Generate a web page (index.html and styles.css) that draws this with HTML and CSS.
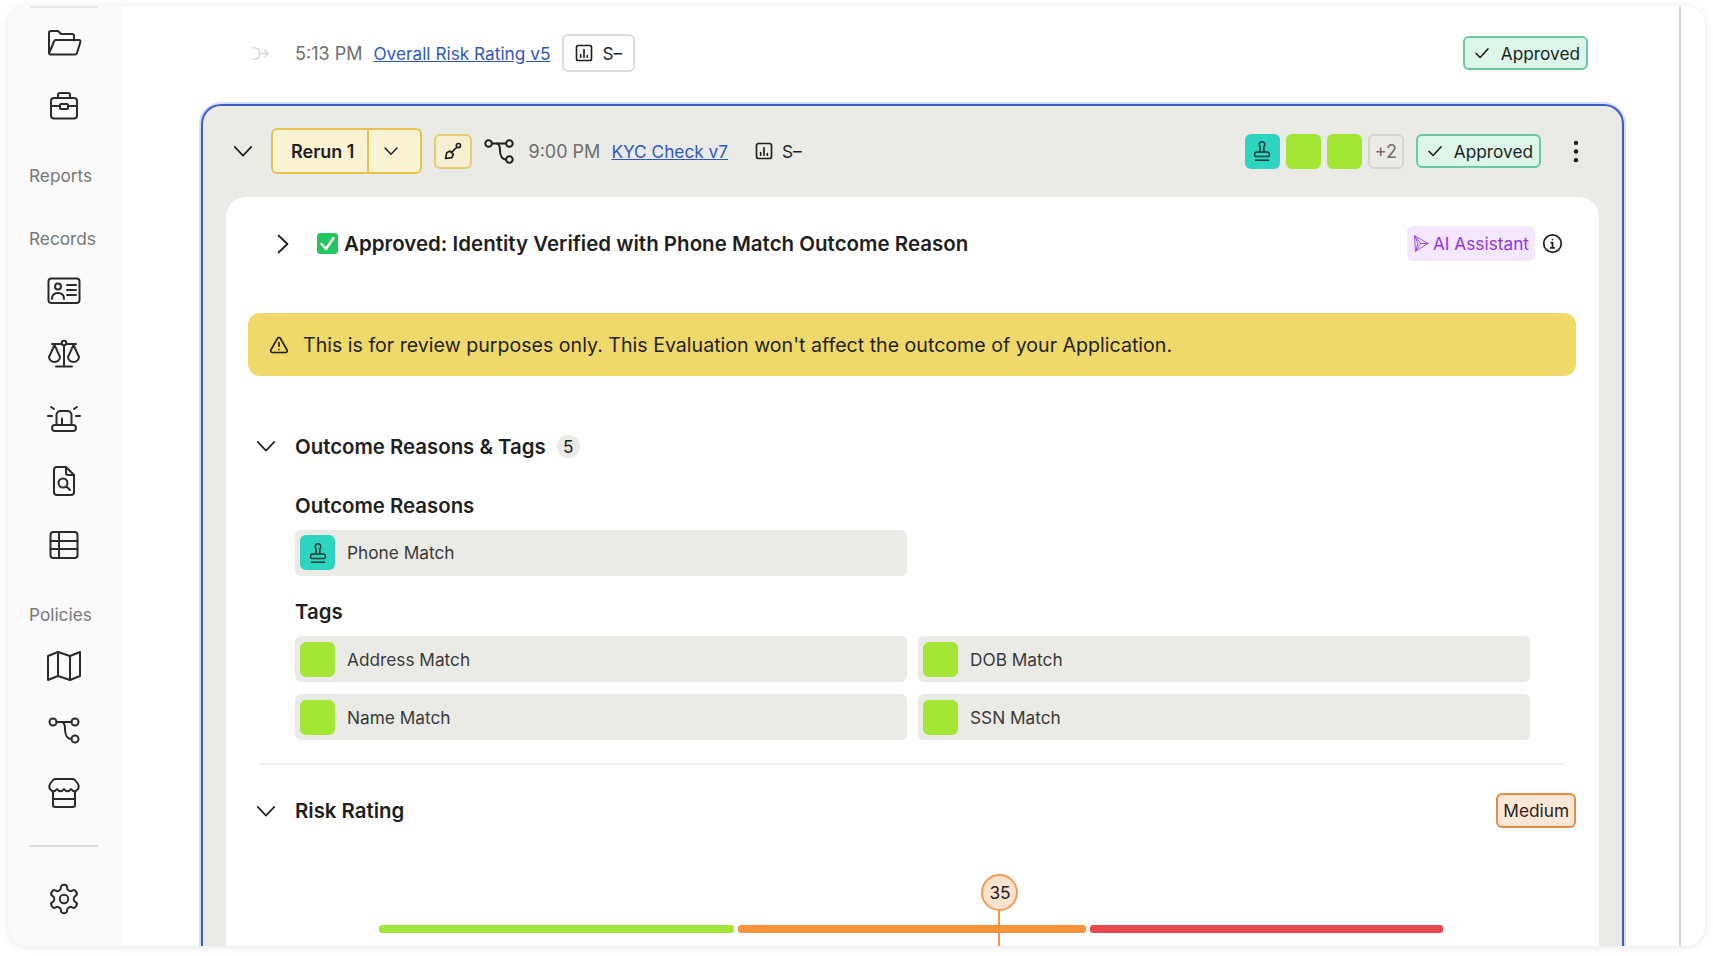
FILE: index.html
```html
<!DOCTYPE html>
<html lang="en">
<head>
  <meta charset="UTF-8">
  <title>Evaluation</title>
  <link rel="stylesheet" href="styles.css">
</head>
<body>
  <svg class="sprites" xmlns="http://www.w3.org/2000/svg">
    <symbol id="i-stamp" viewBox="0 0 24 24"><path d="M5 22h14"/><path d="M19.27 13.73A2.5 2.5 0 0 0 17.5 13h-11A2.5 2.5 0 0 0 4 15.5V17a1 1 0 0 0 1 1h14a1 1 0 0 0 1-1v-1.5c0-.66-.26-1.3-.73-1.77Z"/><path d="M14 13V8.5C14 7 15 7 15 5a3 3 0 0 0-3-3c-1.66 0-3 1-3 3s1 2 1 3.5V13"/></symbol>
    <symbol id="i-chart" viewBox="0 0 24 24"><rect x="3" y="3" width="18" height="18" rx="2.5"/><path d="M8 17v-3M12 17V8M16 17v-2"/></symbol>
    <symbol id="i-check" viewBox="0 0 24 24"><path d="M4 12.5l5.5 5.5L20 6.5"/></symbol>
    <symbol id="i-down" viewBox="0 0 24 24"><path d="M3 7.5l9 9.5 9-9.5"/></symbol>
    <symbol id="i-flow" viewBox="0 0 36 36"><circle cx="7" cy="10" r="3.5"/><circle cx="29" cy="10" r="3.5"/><circle cx="29" cy="27" r="3.5"/><path d="M10.5 10h15"/><path d="M15.5 10c3 0 3.5 2.5 3.5 7 0 6 2.5 10 6.500 10"/></symbol>
  </svg>

  <div class="window">
    <nav class="sidebar">
      <div class="sliver"></div>
      <a class="nav-item"><svg class="nav-icon" viewBox="0 0 36 36"><path d="M3 28V8a2 2 0 0 1 2-2h7l3 3h11a2 2 0 0 1 2 2v4.5"/><path d="M3 28.5l5-12a2 2 0 0 1 2-1.5h23a1.5 1.5 0 0 1 1.4 2l-3.4 11a2 2 0 0 1-2 1.500H4.500A1.500 1.500 0 0 1 3 28z"/></svg></a>
      <a class="nav-item"><svg class="nav-icon" viewBox="0 0 36 36"><rect x="5" y="10" width="26" height="20.5" rx="3"/><path d="M12 10V7a2 2 0 0 1 2-2h8a2 2 0 0 1 2 2v3"/><path d="M5 18h9M22 18h9"/><rect x="14" y="16" width="8" height="5" rx="1"/></svg></a>
      <div class="nav-label">Reports</div>
      <div class="nav-label nav-label-wide">Records</div>
      <a class="nav-item"><svg class="nav-icon" viewBox="0 0 36 36"><rect x="2.5" y="5.5" width="31" height="24.5" rx="3"/><circle cx="12" cy="13.5" r="3"/><path d="M6 26c0-4 2.5-6 6-6s6 2 6 6"/><path d="M21 12h9M21 17h9M21 22h9"/></svg></a>
      <a class="nav-item"><svg class="nav-icon" viewBox="0 0 36 36"><path d="M18 9v21M10 30.500h16M6 8h24"/><circle class="dot" cx="18" cy="7" r="2.2"/><path d="M8.5 9L3 21a5.5 5 0 0 0 11 0z"/><path d="M27.5 9L22 21a5.5 5 0 0 0 11 0z"/></svg></a>
      <a class="nav-item"><svg class="nav-icon" viewBox="0 0 36 36"><path d="M10.5 25V15a4 4 0 0 1 4-4h7a4 4 0 0 1 4 4v10"/><rect x="6" y="25" width="24" height="6" rx="3"/><path d="M16 18.5V25M2 16h4M30 16h4M5 7l3 2M31 7l-3 2"/></svg></a>
      <a class="nav-item"><svg class="nav-icon" viewBox="0 0 36 36"><path d="M20 4H11a3 3 0 0 0-3 3v22a3 3 0 0 0 3 3h14a3 3 0 0 0 3-3V12z"/><path d="M20 4v6a2 2 0 0 0 2 2h6"/><circle cx="17" cy="20" r="4.5"/><path d="M20.5 23.5l3.5 3.5"/></svg></a>
      <a class="nav-item"><svg class="nav-icon" viewBox="0 0 36 36"><rect x="4.5" y="5" width="27" height="26" rx="3"/><path d="M4.5 14h27M4.500 22h27M13 5v26"/></svg></a>
      <div class="nav-label">Policies</div>
      <a class="nav-item"><svg class="nav-icon" viewBox="0 0 36 36"><path d="M2 8l10-4 12 4 10-4v24l-10 4-12-4-10 4z"/><path d="M12 4v24M24 8v24"/></svg></a>
      <a class="nav-item"><svg class="nav-icon"><use href="#i-flow"/></svg></a>
      <a class="nav-item"><svg class="nav-icon" viewBox="0 0 36 36"><path d="M4 14c-1-1.500-1-3 0-5l3-4q1-1 3-1h16q2 0 3 1l3 4c1 2 1 3.500 0 5"/><path d="M4 14c2 3 5 3 7 0 2 3 5 3 7 0 2 3 5 3 7 0 2 3 5 3 7 0"/><path d="M7 17v13a2 2 0 0 0 2 2h18a2 2 0 0 0 2-2V17M7 24h22"/></svg></a>
      <div class="nav-rule"></div>
      <a class="nav-item"><svg class="nav-icon nav-gear" viewBox="0 0 24 24"><path d="M12.22 2h-.44a2 2 0 0 0-2 2v.18a2 2 0 0 1-1 1.73l-.43.25a2 2 0 0 1-2 0l-.15-.08a2 2 0 0 0-2.73.73l-.22.38a2 2 0 0 0 .73 2.73l.15.1a2 2 0 0 1 1 1.72v.51a2 2 0 0 1-1 1.74l-.15.09a2 2 0 0 0-.73 2.73l.22.38a2 2 0 0 0 2.73.73l.15-.08a2 2 0 0 1 2 0l.43.25a2 2 0 0 1 1 1.73V20a2 2 0 0 0 2 2h.44a2 2 0 0 0 2-2v-.18a2 2 0 0 1 1-1.73l.43-.25a2 2 0 0 1 2 0l.15.08a2 2 0 0 0 2.73-.73l.22-.39a2 2 0 0 0-.73-2.73l-.15-.08a2 2 0 0 1-1-1.74v-.5a2 2 0 0 1 1-1.74l.15-.09a2 2 0 0 0 .73-2.73l-.22-.38a2 2 0 0 0-2.73-.73l-.15.08a2 2 0 0 1-2 0l-.43-.25a2 2 0 0 1-1-1.73V4a2 2 0 0 0-2-2z"/><circle cx="12" cy="12" r="3"/></svg></a>
    </nav>

    <main class="content">
      <div class="run-row">
        <svg class="merge-icon" viewBox="0 0 20 16"><path d="M1 2h3c3 0 5 2.500 5 6s-2 6-5 6H1"/><path d="M9 8h9M14.500 4.500L18 8l-3.500 3.500"/></svg>
        <span class="time">5:13 PM</span>
        <a class="run-link" href="#">Overall Risk Rating v5</a>
        <span class="score-box"><svg class="chart-icon"><use href="#i-chart"/></svg>S&ndash;</span>
        <span class="status"><svg class="check-icon"><use href="#i-check"/></svg>Approved</span>
      </div>

      <section class="card">
        <header class="card-head">
          <svg class="toggle"><use href="#i-down"/></svg>
          <div class="rerun">
            <span class="rerun-name">Rerun 1</span>
            <span class="rerun-caret"><svg class="caret"><use href="#i-down"/></svg></span>
          </div>
          <button class="shovel">
            <svg viewBox="0 0 24 24"><path d="M3 21l1.5-7 4-2 4 4-2 4z"/><path d="M10 14l6.5-6.5"/><circle cx="18.5" cy="5.5" r="2.5"/></svg>
          </button>
          <svg class="flow-icon"><use href="#i-flow"/></svg>
          <span class="time">9:00 PM</span>
          <a class="run-link" href="#">KYC Check v7</a>
          <span class="score-plain"><svg class="chart-icon"><use href="#i-chart"/></svg>S&ndash;</span>
          <div class="head-right">
            <span class="swatch teal"><svg class="stamp"><use href="#i-stamp"/></svg></span>
            <span class="swatch lime"></span>
            <span class="swatch lime"></span>
            <span class="more">+2</span>
            <span class="status"><svg class="check-icon"><use href="#i-check"/></svg>Approved</span>
            <svg class="kebab" viewBox="0 0 6 24"><circle cx="3" cy="3" r="2.3"/><circle cx="3" cy="12" r="2.3"/><circle cx="3" cy="21" r="2.3"/></svg>
          </div>
        </header>

        <div class="panel">
          <div class="title-row">
            <svg class="toggle-right" viewBox="0 0 12 20"><path d="M1.5 1.5L10.500 10l-9 8.500"/></svg>
            <svg class="tick" viewBox="0 0 21 21"><rect width="21" height="21" rx="3.5"/><path d="M4.5 11l4.500 5 7.500-11"/></svg>
            <h1>Approved: Identity Verified with Phone Match Outcome Reason</h1>
            <span class="ai-chip">
              <svg viewBox="0 0 18 18"><path d="M2 1l14 8-13 8zM2 1l6 8-5 8M2 1l3 8-2 8M8 9h8"/></svg>
              AI Assistant
            </span>
            <svg class="info" viewBox="0 0 24 24"><circle cx="12" cy="12" r="10"/><path d="M12 17v-6h-1.5M10 17h4M12 7.5v.01"/></svg>
          </div>

          <div class="banner">
            <svg viewBox="0 0 24 24"><path d="M21.7 18l-8-14a2 2 0 0 0-3.5 0l-8 14A2 2 0 0 0 4 21h16a2 2 0 0 0 1.7-3z"/><path d="M12 9v4.5M12 17.5v.01"/></svg>
            This is for review purposes only. This Evaluation won't affect the outcome of your Application.
          </div>

          <div class="section-head">
            <svg class="toggle"><use href="#i-down"/></svg>
            <h2>Outcome Reasons &amp; Tags</h2>
            <span class="count">5</span>
          </div>

          <div class="section-body">
            <h3>Outcome Reasons</h3>
            <div class="chips">
              <div class="chip"><span class="swatch teal"><svg class="stamp"><use href="#i-stamp"/></svg></span>Phone Match</div>
            </div>
            <h3 class="tags-title">Tags</h3>
            <div class="chips">
              <div class="chip"><span class="swatch lime"></span>Address Match</div>
              <div class="chip"><span class="swatch lime"></span>DOB Match</div>
              <div class="chip"><span class="swatch lime"></span>Name Match</div>
              <div class="chip"><span class="swatch lime"></span>SSN Match</div>
            </div>
          </div>

          <hr class="rule">

          <div class="section-head risk-head">
            <svg class="toggle"><use href="#i-down"/></svg>
            <h2>Risk Rating</h2>
            <span class="level">Medium</span>
          </div>

          <div class="meter">
            <div class="marker" style="left: 58.22%"><span>35</span></div>
            <div class="bars">
              <i class="bar bar-low"></i>
              <i class="bar bar-mid"></i>
              <i class="bar bar-high"></i>
            </div>
          </div>
        </div>
      </section>
    </main>

    <div class="scroll-track"></div>
  </div>
</body>
</html>
```

FILE: styles.css
```css
* {
  margin: 0;
  padding: 0;
  box-sizing: border-box;
}

html, body {
  height: 100%;
  overflow: hidden;
}

body {
  padding: 6px 8px 10px;
  font-family: Inter, "Noto Sans", sans-serif;
  font-size: 17.25px;
  color: #1f1f1e;
  background-color: #fff;
}

svg {
  fill: none;
  stroke: currentColor;
  stroke-linecap: round;
  stroke-linejoin: round;
  flex: none;
}

.sprites {
  display: none;
}

.window {
  display: flex;
  height: 940px;
  overflow: hidden;
  border-radius: 20px;
  background-color: #fff;
  box-shadow: 0 1px 8px rgba(0, 0, 0, .1);
}

/* sidebar */
.sidebar {
  display: flex;
  flex-direction: column;
  flex: none;
  width: 113px;
  background-color: #fafafa;
}

.sliver {
  flex: none;
  width: 68px;
  height: 2px;
  margin: 0 auto 3px 22px;
  background-color: #e6e6e3;
}

.nav-item {
  display: flex;
  flex: none;
  justify-content: center;
  align-items: center;
  height: 63.5px;
  padding-right: 2px;
  color: #2b2b2a;
}

.nav-icon {
  width: 36px;
  height: 36px;
  stroke-width: 2;
}

.nav-gear {
  width: 34px;
  height: 34px;
  stroke-width: 1.4;
}

.dot {
  fill: #fafafa;
}

.nav-label {
  flex: none;
  height: 24px;
  margin: 26px 0 8px 21px;
  font-size: 17.25px;
  line-height: 24px;
  color: #777775;
}

.nav-label-wide {
  margin-top: 31px;
}

.nav-rule {
  flex: none;
  width: 69px;
  height: 2px;
  margin: 20px 0 20px 21px;
  background-color: #dcdcd9;
}

/* main column */
.content {
  flex: 1;
  min-width: 0;
  padding: 28px 55px 0 80px;
}

.scroll-track {
  flex: none;
  width: 26px;
  border-left: 2px solid #d8d8d3;
}

.run-row {
  display: flex;
  align-items: center;
  height: 38px;
  margin-bottom: 32px;
  padding: 0 36px 0 50px;
}

.merge-icon {
  width: 19px;
  height: 15px;
  margin-right: 25px;
  color: #d5d5d0;
  stroke-width: 1.5;
}

.time {
  margin-right: 11px;
  font-size: 18px;
  color: #6f6f6c;
}

.run-link {
  color: #2f58c4;
}

.score-box,
.score-plain {
  display: flex;
  align-items: center;
  gap: 8px;
}

.score-box {
  height: 38px;
  margin-left: 12px;
  padding: 0 11px 0 10px;
  border: 2px solid #dcdcd8;
  border-radius: 6px;
}

.score-plain {
  margin-left: 26px;
}

.chart-icon {
  width: 20px;
  height: 20px;
  stroke-width: 2;
}

.status {
  display: flex;
  align-items: center;
  gap: 10px;
  height: 34px;
  margin-left: auto;
  padding: 0 6px 0 8px;
  border: 2px solid #6dc6a2;
  border-radius: 6px;
  background-color: #dcf6e9;
}

.check-icon {
  width: 18px;
  height: 18px;
  stroke-width: 2;
}

/* card */
.card {
  border: 2px solid #3a5fc8;
  border-bottom: 0;
  border-radius: 20px 20px 0 0;
  padding: 22px 23px 0;
  background-color: #eaeae6;
  box-shadow: 0 0 0 2px #d6def6;
}

.card-head {
  display: flex;
  align-items: center;
  height: 46px;
  margin-bottom: 23px;
  padding-left: 6px;
}

.toggle {
  width: 22px;
  height: 22px;
  stroke-width: 1.8;
}

.rerun {
  display: flex;
  align-items: stretch;
  height: 46px;
  margin-left: 17px;
  border: 2px solid #e4c552;
  border-radius: 6px;
  background-color: #f9f2d3;
}

.rerun-name {
  display: flex;
  align-items: center;
  padding: 0 13px 0 18px;
  border-right: 2px solid #e4c552;
  font-size: 18px;
  font-weight: 600;
}

.rerun-caret {
  display: flex;
  align-items: center;
  justify-content: center;
  width: 51px;
  padding-right: 8px;
}

.caret {
  width: 16px;
  height: 16px;
  stroke-width: 2.2;
}

.shovel {
  display: flex;
  align-items: center;
  justify-content: center;
  width: 38px;
  height: 35px;
  margin: 0 10px 0 12px;
  border: 2px solid #e4cd75;
  border-radius: 6px;
  color: #1f1f1e;
  background-color: #f6efd2;
}

.shovel svg {
  width: 20px;
  height: 20px;
  stroke-width: 2;
}

.flow-icon {
  width: 34px;
  height: 34px;
  margin-right: 12px;
  stroke-width: 2.1;
}

.head-right {
  display: flex;
  align-items: center;
  margin-left: auto;
  gap: 6px;
}

.swatch {
  display: flex;
  align-items: center;
  justify-content: center;
  flex: none;
  width: 35px;
  height: 35px;
  border-radius: 6px;
}

.teal {
  background-color: #2dd4bf;
}

.lime {
  background-color: #a3e635;
}

.stamp {
  width: 22px;
  height: 22px;
  stroke-width: 1.7;
  color: #143c38;
}

.more {
  display: flex;
  align-items: center;
  justify-content: center;
  width: 36px;
  height: 35px;
  border: 2px solid #d4d4d0;
  border-radius: 6px;
  font-size: 18px;
  color: #6f6f6c;
}

.head-right .status {
  margin-left: 6px;
}

.kebab {
  width: 6px;
  height: 23px;
  margin: 0 20px 0 26px;
  fill: #1f1f1e;
  stroke: none;
}

/* white panel */
.panel {
  height: 760px;
  padding: 29px 23px 0 22px;
  border-radius: 20px 20px 0 0;
  background-color: #fff;
}

.title-row {
  display: flex;
  align-items: center;
  height: 35px;
  margin-bottom: 52px;
  padding: 0 13px 0 29px;
}

.toggle-right {
  width: 12px;
  height: 20px;
  margin-right: 28px;
  stroke-width: 1.8;
}

.tick {
  width: 21px;
  height: 21px;
  margin-right: 6px;
  fill: #22c55e;
  stroke: none;
}

.tick path {
  fill: none;
  stroke: #fff;
  stroke-width: 2.5;
}

h1 {
  font-size: 20.5px;
  font-weight: 600;
}

.ai-chip {
  display: flex;
  align-items: center;
  gap: 3px;
  height: 35px;
  margin-left: auto;
  padding: 0 6px;
  border-radius: 6px;
  color: #9333ea;
  background-color: #f3e8ff;
}

.ai-chip svg {
  width: 17px;
  height: 17px;
  stroke-width: .9;
}

.info {
  width: 21px;
  height: 21px;
  margin-left: 7px;
  stroke-width: 2;
}

.banner {
  display: flex;
  align-items: center;
  gap: 14px;
  height: 63px;
  margin-bottom: 54px;
  padding-left: 21px;
  border-radius: 12px;
  font-size: 19.6px;
  background-color: #f0d96b;
}

.banner svg {
  width: 20px;
  height: 20px;
  stroke-width: 2;
}

.section-head {
  display: flex;
  align-items: center;
  height: 32px;
  padding-left: 7px;
}

.section-head h2 {
  margin-left: 18px;
  font-size: 20.4px;
  font-weight: 600;
}

.count {
  display: flex;
  align-items: center;
  justify-content: center;
  width: 23px;
  height: 23px;
  margin-left: 11px;
  border-radius: 50%;
  font-size: 17.25px;
  background-color: #eaeae6;
}

.section-body {
  margin-top: 29.5px;
  padding-left: 47px;
}

h3 {
  margin-bottom: 10px;
  font-size: 20.4px;
  line-height: 28px;
  font-weight: 600;
}

.tags-title {
  margin-top: 22.5px;
}

.chips {
  display: grid;
  grid-template-columns: 612px 612px;
  gap: 12px 11px;
}

.chip {
  display: flex;
  align-items: center;
  gap: 12px;
  height: 46px;
  padding-left: 5px;
  border-radius: 6px;
  color: #3a3a38;
  background-color: #eaeae6;
}

.rule {
  height: 2px;
  margin: 23px 11px 0 12px;
  border: 0;
  background-color: #eeeeeb;
}

.risk-head {
  height: 35px;
  margin-top: 28px;
}

.level {
  display: flex;
  align-items: center;
  height: 35px;
  margin-left: auto;
  padding: 0 5px;
  border: 2px solid #db8f48;
  border-radius: 6px;
  background-color: #fde6d3;
}

.meter {
  position: relative;
  margin: 46px 133px 0 131px;
  padding-top: 51px;
}

.bars {
  display: flex;
  gap: 4px;
}

.bar {
  height: 8px;
  border-radius: 3px;
}

.bar-low {
  flex: 355;
  background-color: #a3e635;
}

.bar-mid {
  flex: 349;
  background-color: #fb923c;
}

.bar-high {
  flex: 353;
  background-color: #ea4650;
}

.marker {
  position: absolute;
  top: 0;
  width: 2px;
  height: 80px;
  background-color: #fb923c;
}

.marker span {
  position: absolute;
  left: -17px;
  display: flex;
  align-items: center;
  justify-content: center;
  width: 37px;
  height: 37px;
  border: 2px solid #f59a52;
  border-radius: 50%;
  font-size: 17.25px;
  background-color: #fde2cf;
}
```
